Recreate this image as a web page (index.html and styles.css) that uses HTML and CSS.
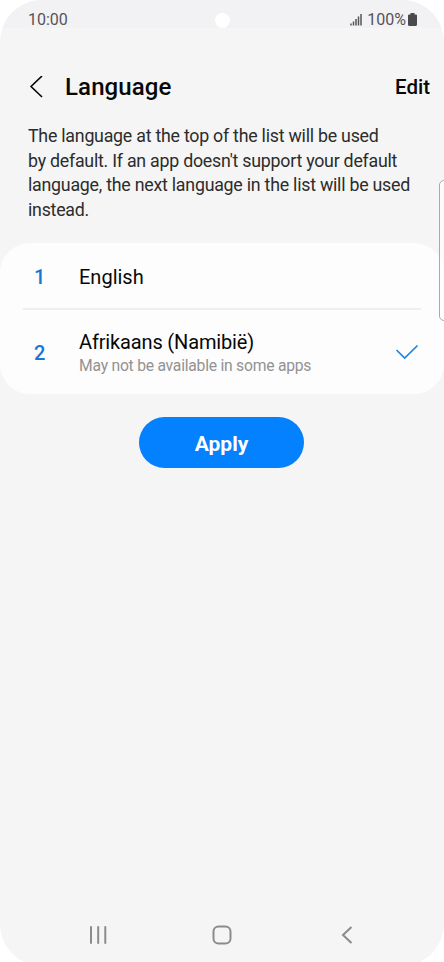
FILE: index.html
```html
<!DOCTYPE html>
<html lang="en">
<head>
<meta charset="utf-8">
<title>Language</title>
<link rel="stylesheet" href="styles.css">
</head>
<body>
<div class="phone">
  <div class="status">
    <span class="time">10:00</span>
    <span class="camera"></span>
    <div class="indicators">
      <svg class="signal" width="12" height="13" viewBox="0 0 12 13"><path d="M1 10.500V12.500M3.500 8.500V12.500M6 6V12.500M8.500 3.500V12.500M11 1V12.500" fill="none" stroke="#555558" stroke-width="1.500"/></svg>
      <span class="percent">100%</span>
      <svg class="battery" width="9" height="13" viewBox="0 0 9 13"><path d="M2.500 0h4v1.500H8q1 0 1 1V11.500q0 1.500-1.500 1.500h-6Q0 13 0 11.500V2.500q0-1 1-1h1.500z" fill="#4a4a4c"/></svg>
    </div>
  </div>
  <header class="header">
    <svg class="back" width="14" height="22" viewBox="0 0 14 22"><path d="M12.500 0.500 2 10.500 12.500 20.500" fill="none" stroke="#080808" stroke-width="1.700" stroke-linecap="round" stroke-linejoin="round"/></svg>
    <h1 class="title">Language</h1>
    <span class="edit">Edit</span>
  </header>
  <p class="description">The language at the top of the list will be used<br>by default. If an app doesn't support your default<br>language, the next language in the list will be used<br>instead.</p>
  <div class="list">
    <div class="row first">
      <span class="number">1</span>
      <span class="name english">English</span>
    </div>
    <div class="divider"></div>
    <div class="row second">
      <span class="number">2</span>
      <div class="labels">
        <div class="name long">Afrikaans (Namibië)</div>
        <div class="note">May not be available in some apps</div>
      </div>
      <svg class="check" width="24" height="16" viewBox="0 0 24 16"><path d="M1.500 6 9.700 14 22.500 1.500" fill="none" stroke="#1b87e4" stroke-width="1.700"/></svg>
    </div>
  </div>
  <div class="apply"><span class="apply-text">Apply</span></div>
  <nav class="nav">
    <svg width="18" height="18" viewBox="0 0 18 18"><path d="M2 1V17M9.200 1V17M16.300 1V17" fill="none" stroke="#8b8b8b" stroke-width="2" stroke-linecap="round"/></svg>
    <svg class="home" width="20" height="20" viewBox="0 0 20 20"><rect x="1.500" y="1.500" width="17" height="17" rx="5" fill="none" stroke="#8b8b8b" stroke-width="2"/></svg>
    <svg width="12" height="18" viewBox="0 0 12 18"><path d="M10.500 1 2 9l8.500 8" fill="none" stroke="#8b8b8b" stroke-width="2"/></svg>
  </nav>
  <div class="edge-panel"></div>
</div>
</body>
</html>
```
FILE: styles.css
```css
* { box-sizing: border-box; }
body { margin: 0; background: #fff; font-family: Roboto, sans-serif; overflow: hidden; height: 962px; }
.phone { position: relative; width: 444px; height: 966px; border-radius: 42px; background: #f5f5f5; overflow: hidden; display: flex; flex-direction: column; }
.status { height: 28px; background: #f2f2f4; padding: 11px 27px 0 28px; display: flex; align-items: center; justify-content: space-between; position: relative; color: #555558; font-size: 16px; line-height: 17px; }
.camera { position: absolute; left: 215px; top: 13px; width: 15px; height: 15px; border-radius: 50%; background: #fff; }
.indicators { display: flex; align-items: center; }
.percent { margin: 0 2px 0 5px; }
.signal { margin-right: 0; }
.header { height: 92px; display: flex; align-items: center; padding: 26px 14px 0 29px; }
.title { margin: 0 auto 0 22px; font-size: 24px; font-weight: 500; line-height: 28px; letter-spacing: 0.120px; color: #080808; }
.edit { font-size: 20.500px; font-weight: 500; color: #080808; }
.description { margin: 4px 0 0 28px; font-size: 17.800px; letter-spacing: -0.240px; line-height: 24.700px; color: #2c2c2c; white-space: nowrap; }
.list { margin-top: 20px; height: 151px; flex: none; border-radius: 30px; background: #fdfdfd; }
.row { display: flex; align-items: center; padding: 0 25px 0 34px; }
.first { height: 65px; padding-top: 3px; }
.second { height: 85px; }
.divider { height: 2px; margin: 0 23px; background: #eee; }
.number { width: 45px; font-size: 20px; font-weight: 500; color: #1678d2; }
.second .number { padding-top: 1px; }
.labels { padding-top: 2px; }
.name { font-size: 20px; line-height: 24px; color: #080808; }
.long { letter-spacing: -0.150px; }
.note { font-size: 15.700px; letter-spacing: -0.240px; line-height: 20px; margin-top: 2px; color: #929292; }
.check { margin-left: auto; }
.apply { align-self: center; width: 165px; height: 51px; margin: 23px 1px 0 0; padding-top: 3px; border-radius: 26px; background: #0381fe; color: #fff; display: flex; align-items: center; justify-content: center; font-size: 21px; font-weight: 700; }
.nav { margin: auto 91px 21px 89px; height: 20px; display: flex; align-items: center; justify-content: space-between; }
.home { margin-right: 4px; }
.edge-panel { position: absolute; left: 439px; top: 180px; width: 12px; height: 141px; border: 1px solid #aaa; border-radius: 5px; background: rgba(255,255,255,.55); }
```
